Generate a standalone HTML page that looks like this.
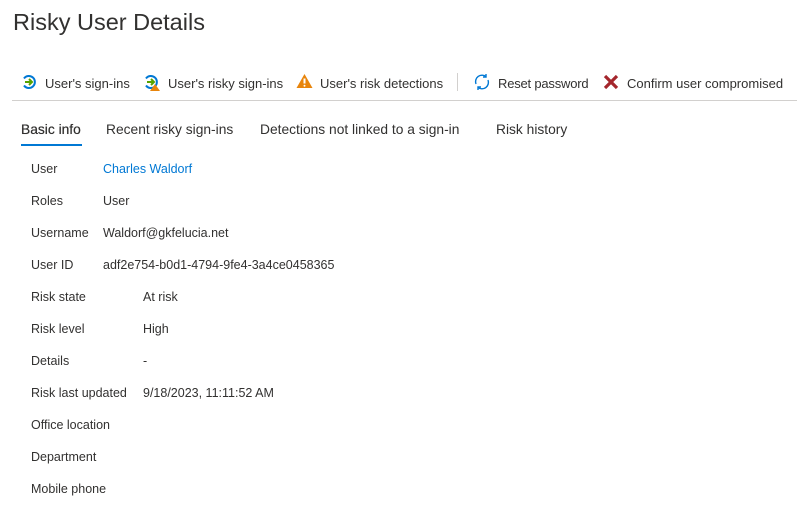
<!DOCTYPE html>
<html><head><style>
body{margin:0;width:797px;height:519px;background:#fff;font-family:"Liberation Sans",sans-serif;color:#323130;position:relative;overflow:hidden}
.a{position:absolute;white-space:nowrap}
.t{font-size:13px}
.tb{font-size:13.8px}
.r{font-size:12.5px}
</style></head><body>
<div class="a" style="left:13px;top:9px;font-size:23.5px;color:#323130">Risky User Details</div>

<svg class="a" style="left:21px;top:74px" width="16" height="16" viewBox="0 0 16 16"><path d="M3 4.5A6 6 0 1 1 3 11.5" fill="none" stroke="#0078d4" stroke-width="2"/><path d="M4 8h7M8 5l3 3-3 3" fill="none" stroke="#57a300" stroke-width="2"/></svg>
<div class="a t" style="left:45px;top:76px">User's sign-ins</div>
<svg class="a" style="left:143px;top:74px" width="18" height="18" viewBox="0 0 18 18"><path d="M3 4.5A6 6 0 1 1 3 11.5" fill="none" stroke="#0078d4" stroke-width="2"/><path d="M4 8h7M8 5l3 3-3 3" fill="none" stroke="#57a300" stroke-width="2"/><path d="M12 10l5 7h-10z" fill="#e8850c"/></svg>
<div class="a t" style="left:168px;top:76px">User's risky sign-ins</div>
<svg class="a" style="left:296px;top:73px" width="17" height="16" viewBox="0 0 17 16"><path d="M8.5 1L16.5 15H0.5z" fill="#e8850c"/><path d="M8.5 5.5v5" stroke="#fff" stroke-width="2"/><circle cx="8.5" cy="12.7" r="1" fill="#fff"/></svg>
<div class="a t" style="left:320px;top:76px">User's risk detections</div>
<div class="a" style="left:457px;top:73px;width:1px;height:18px;background:#d2d0ce"></div>
<svg class="a" style="left:473px;top:73px" width="18" height="18" viewBox="0 0 18 18"><path d="M3 11A6.5 6.5 0 0 1 13 3.5M15 7A6.5 6.5 0 0 1 5 14.5" fill="none" stroke="#0078d4" stroke-width="1.4"/><path d="M13 1v3h-3M5 17v-3h3" fill="none" stroke="#0078d4" stroke-width="1.4"/></svg>
<div class="a t" style="left:498px;top:76px;letter-spacing:-0.2px">Reset password</div>
<svg class="a" style="left:603px;top:74px" width="16" height="16" viewBox="0 0 16 16"><path d="M2 2l12 12M14 2L2 14" stroke="#a4262c" stroke-width="3.2"/></svg>
<div class="a t" style="left:627px;top:76px">Confirm user compromised</div>
<div class="a" style="left:12px;top:100px;width:785px;height:1px;background:#d2d0ce"></div>

<div class="a tb" style="left:21px;top:122px;text-shadow:0 0 0.4px #323130">Basic info</div>
<div class="a" style="left:21px;top:144px;width:61px;height:2px;background:#0078d4"></div>
<div class="a tb" style="left:106px;top:122px">Recent risky sign-ins</div>
<div class="a tb" style="left:260px;top:122px">Detections not linked to a sign-in</div>
<div class="a tb" style="left:496px;top:122px">Risk history</div>

<div class="a r" style="left:31px;top:162px">User</div><div class="a r" style="left:103px;top:162px;color:#0078d4">Charles Waldorf</div>
<div class="a r" style="left:31px;top:194px">Roles</div><div class="a r" style="left:103px;top:194px">User</div>
<div class="a r" style="left:31px;top:226px">Username</div><div class="a r" style="left:103px;top:226px">Waldorf@gkfelucia.net</div>
<div class="a r" style="left:31px;top:258px">User ID</div><div class="a r" style="left:103px;top:258px">adf2e754-b0d1-4794-9fe4-3a4ce0458365</div>
<div class="a r" style="left:31px;top:290px">Risk state</div><div class="a r" style="left:143px;top:290px">At risk</div>
<div class="a r" style="left:31px;top:322px">Risk level</div><div class="a r" style="left:143px;top:322px">High</div>
<div class="a r" style="left:31px;top:354px">Details</div><div class="a r" style="left:143px;top:354px">-</div>
<div class="a r" style="left:31px;top:386px">Risk last updated</div><div class="a r" style="left:143px;top:386px">9/18/2023, 11:11:52 AM</div>
<div class="a r" style="left:31px;top:418px">Office location</div>
<div class="a r" style="left:31px;top:450px">Department</div>
<div class="a r" style="left:31px;top:482px">Mobile phone</div>
</body></html>
